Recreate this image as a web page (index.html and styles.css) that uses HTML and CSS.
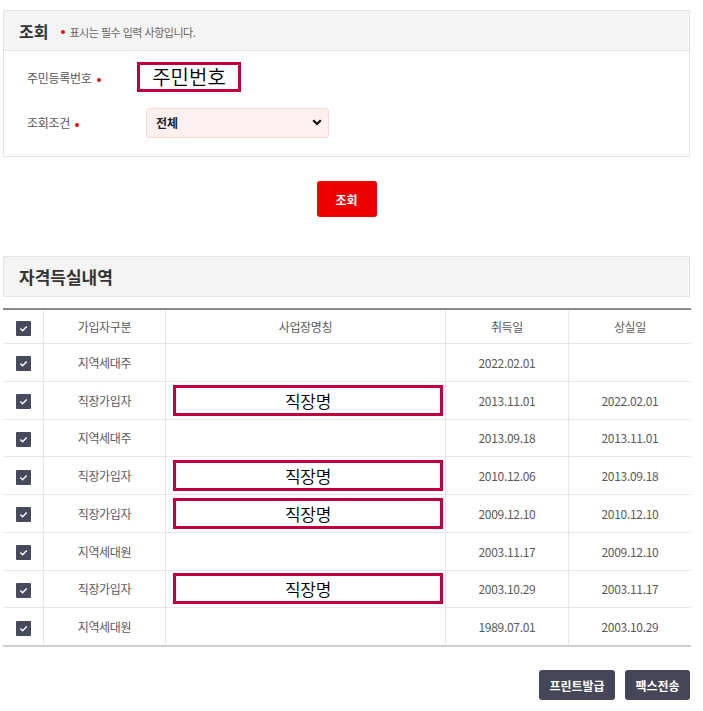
FILE: index.html
```html
<!DOCTYPE html>
<html lang="ko">
<head>
    <meta charset="utf-8">
    <title>자격득실내역 조회</title>
    <meta name="viewport" content="width=device-width, initial-scale=1.0">
    <link rel="stylesheet" href="styles.css">
</head>
<body>
    <div class="wrap">
        <section class="panel">
            <div class="panel-head">
                <h2>조회</h2>
                <span class="req-note"><i class="dot"></i>표시는 필수 입력 사항입니다.</span>
            </div>
            <div class="panel-body">
                <div class="form-row">
                    <label>주민등록번호 <i class="dot"></i></label>
                    <div class="mask mask-id">주민번호</div>
                </div>
                <div class="form-row">
                    <label>조회조건 <i class="dot"></i></label>
                    <div class="select">
                        <span>전체</span>
                        <svg width="10" height="7" viewBox="0 0 10 7"><path d="M1.2 1.2 L5 5 L8.8 1.2" fill="none" stroke="#111" stroke-width="2.2"/></svg>
                    </div>
                </div>
            </div>
        </section>

        <div class="search-btn-row">
            <button class="btn-red">조회</button>
        </div>

        <div class="section-head">
            <h3>자격득실내역</h3>
        </div>

        <table class="grid">
            <thead>
                <tr>
                    <th class="chk-col"><span class="chk"></span></th>
                    <th class="type-col">가입자구분</th>
                    <th class="name-col">사업장명칭</th>
                    <th class="date-col">취득일</th>
                    <th class="date-col">상실일</th>
                </tr>
            </thead>
            <tbody>
                <tr><td><span class="chk"></span></td><td>지역세대주</td><td></td><td>2022.02.01</td><td></td></tr>
                <tr><td><span class="chk"></span></td><td>직장가입자</td><td><div class="mask mask-name">직장명</div></td><td>2013.11.01</td><td>2022.02.01</td></tr>
                <tr><td><span class="chk"></span></td><td>지역세대주</td><td></td><td>2013.09.18</td><td>2013.11.01</td></tr>
                <tr><td><span class="chk"></span></td><td>직장가입자</td><td><div class="mask mask-name">직장명</div></td><td>2010.12.06</td><td>2013.09.18</td></tr>
                <tr><td><span class="chk"></span></td><td>직장가입자</td><td><div class="mask mask-name">직장명</div></td><td>2009.12.10</td><td>2010.12.10</td></tr>
                <tr><td><span class="chk"></span></td><td>지역세대원</td><td></td><td>2003.11.17</td><td>2009.12.10</td></tr>
                <tr><td><span class="chk"></span></td><td>직장가입자</td><td><div class="mask mask-name">직장명</div></td><td>2003.10.29</td><td>2003.11.17</td></tr>
                <tr><td><span class="chk"></span></td><td>지역세대원</td><td></td><td>1989.07.01</td><td>2003.10.29</td></tr>
            </tbody>
        </table>

        <div class="bottom-btns">
            <button class="btn-dark btn-print">프린트발급</button>
            <button class="btn-dark btn-fax">팩스전송</button>
        </div>
    </div>
</body>
</html>
```

FILE: styles.css
```css
body {
    margin: 0;
    background: #fff;
    font-family: "Noto Sans CJK KR", "Noto Sans", sans-serif;
    color: #555;
    font-size: 12px;
}
.wrap {
    width: 687px;
    margin: 10px 0 0 3px;
}
.panel {
    border: 1px solid #e4e4e4;
}
.panel-head {
    display: flex;
    align-items: center;
    height: 39px;
    padding-left: 15px;
    background: #f4f4f4;
    border-bottom: 1px solid #e4e4e4;
}
.panel-head h2 {
    margin: 0;
    font-size: 16px;
    font-weight: bold;
    color: #333;
}
.req-note {
    display: flex;
    align-items: center;
    margin-left: 13px;
    margin-top: 3px;
    font-size: 11px;
    color: #666;
    letter-spacing: -0.5px;
}
.dot {
    display: inline-block;
    width: 4px;
    height: 4px;
    border-radius: 50%;
    background: #e60012;
    margin-right: 4px;
    vertical-align: middle;
}
label .dot {
    margin-left: 2px;
    margin-right: 0;
}
.panel-body {
    padding: 12px 0 19px 23px;
}
.form-row {
    display: flex;
    align-items: center;
    height: 29px;
}
.form-row + .form-row {
    margin-top: 16px;
}
.form-row label {
    width: 110px;
    color: #555;
    letter-spacing: -0.3px;
}
.mask {
    box-sizing: border-box;
    border: 3px solid #c0003c;
    background: #fff;
    color: #000;
    text-align: center;
    font-weight: 350;
}
.mask-id {
    width: 104px;
    height: 30px;
    margin-top: -1px;
    font-size: 20px;
    line-height: 23px;
}
.select {
    box-sizing: border-box;
    display: flex;
    align-items: center;
    justify-content: space-between;
    width: 183px;
    height: 30px;
    margin-left: 9px;
    padding: 0 6px 0 9px;
    background: #fff0f0;
    border: 1px solid #fbd8d8;
    border-radius: 3px;
    color: #222;
    font-weight: bold;
}
.search-btn-row {
    display: flex;
    justify-content: center;
    margin-top: 24px;
}
button {
    font-family: inherit;
    font-weight: bold;
    font-size: 12px;
    color: #fff;
    border: none;
    border-radius: 3px;
    padding: 0;
    cursor: pointer;
}
.btn-red {
    width: 60px;
    height: 36px;
    background: #ee0000;
}
.section-head {
    margin-top: 39px;
    height: 39px;
    border: 1px solid #e4e4e4;
    background: #f4f4f4;
    display: flex;
    align-items: center;
    padding-left: 15px;
}
.section-head h3 {
    margin: 0;
    font-size: 17px;
    font-weight: bold;
    color: #333;
}
.grid {
    width: 687px;
    margin-top: 11px;
    border-collapse: collapse;
    border-top: 2px solid #8a8a94;
    border-bottom: 2px solid #cfd0d6;
    table-layout: fixed;
}
.grid th,
.grid td {
    border-left: 1px solid #e6e6e6;
    border-top: 1px solid #e6e6e6;
    text-align: center;
    font-weight: normal;
    color: #5a5a5a;
    padding: 0;
    letter-spacing: -0.3px;
}
.grid th:first-child,
.grid td:first-child {
    border-left: none;
}
.grid th {
    height: 33px;
    border-top: none;
}
.grid td {
    height: 36.75px;
}
.chk-col { width: 40px; }
.type-col { width: 121px; }
.name-col { width: 279px; }
.date-col { width: 122px; }
.chk {
    display: inline-block;
    width: 15px;
    height: 15px;
    border-radius: 1px;
    background: #474a5c url("data:image/svg+xml;utf8,<svg xmlns='http://www.w3.org/2000/svg' width='15' height='15'><path d='M4.3 7.6 L6.6 9.8 L10.7 5.6' fill='none' stroke='white' stroke-width='1.4'/></svg>") no-repeat center;
    vertical-align: middle;
}
.mask-name {
    width: 270px;
    height: 31px;
    margin-left: 7px;
    font-size: 17px;
    line-height: 25px;
}
.bottom-btns {
    display: flex;
    justify-content: flex-end;
    gap: 10px;
    margin-top: 23px;
}
.btn-dark {
    height: 30px;
    background: #454657;
}
.btn-print {
    width: 76px;
}
.btn-fax {
    width: 65px;
}
```
